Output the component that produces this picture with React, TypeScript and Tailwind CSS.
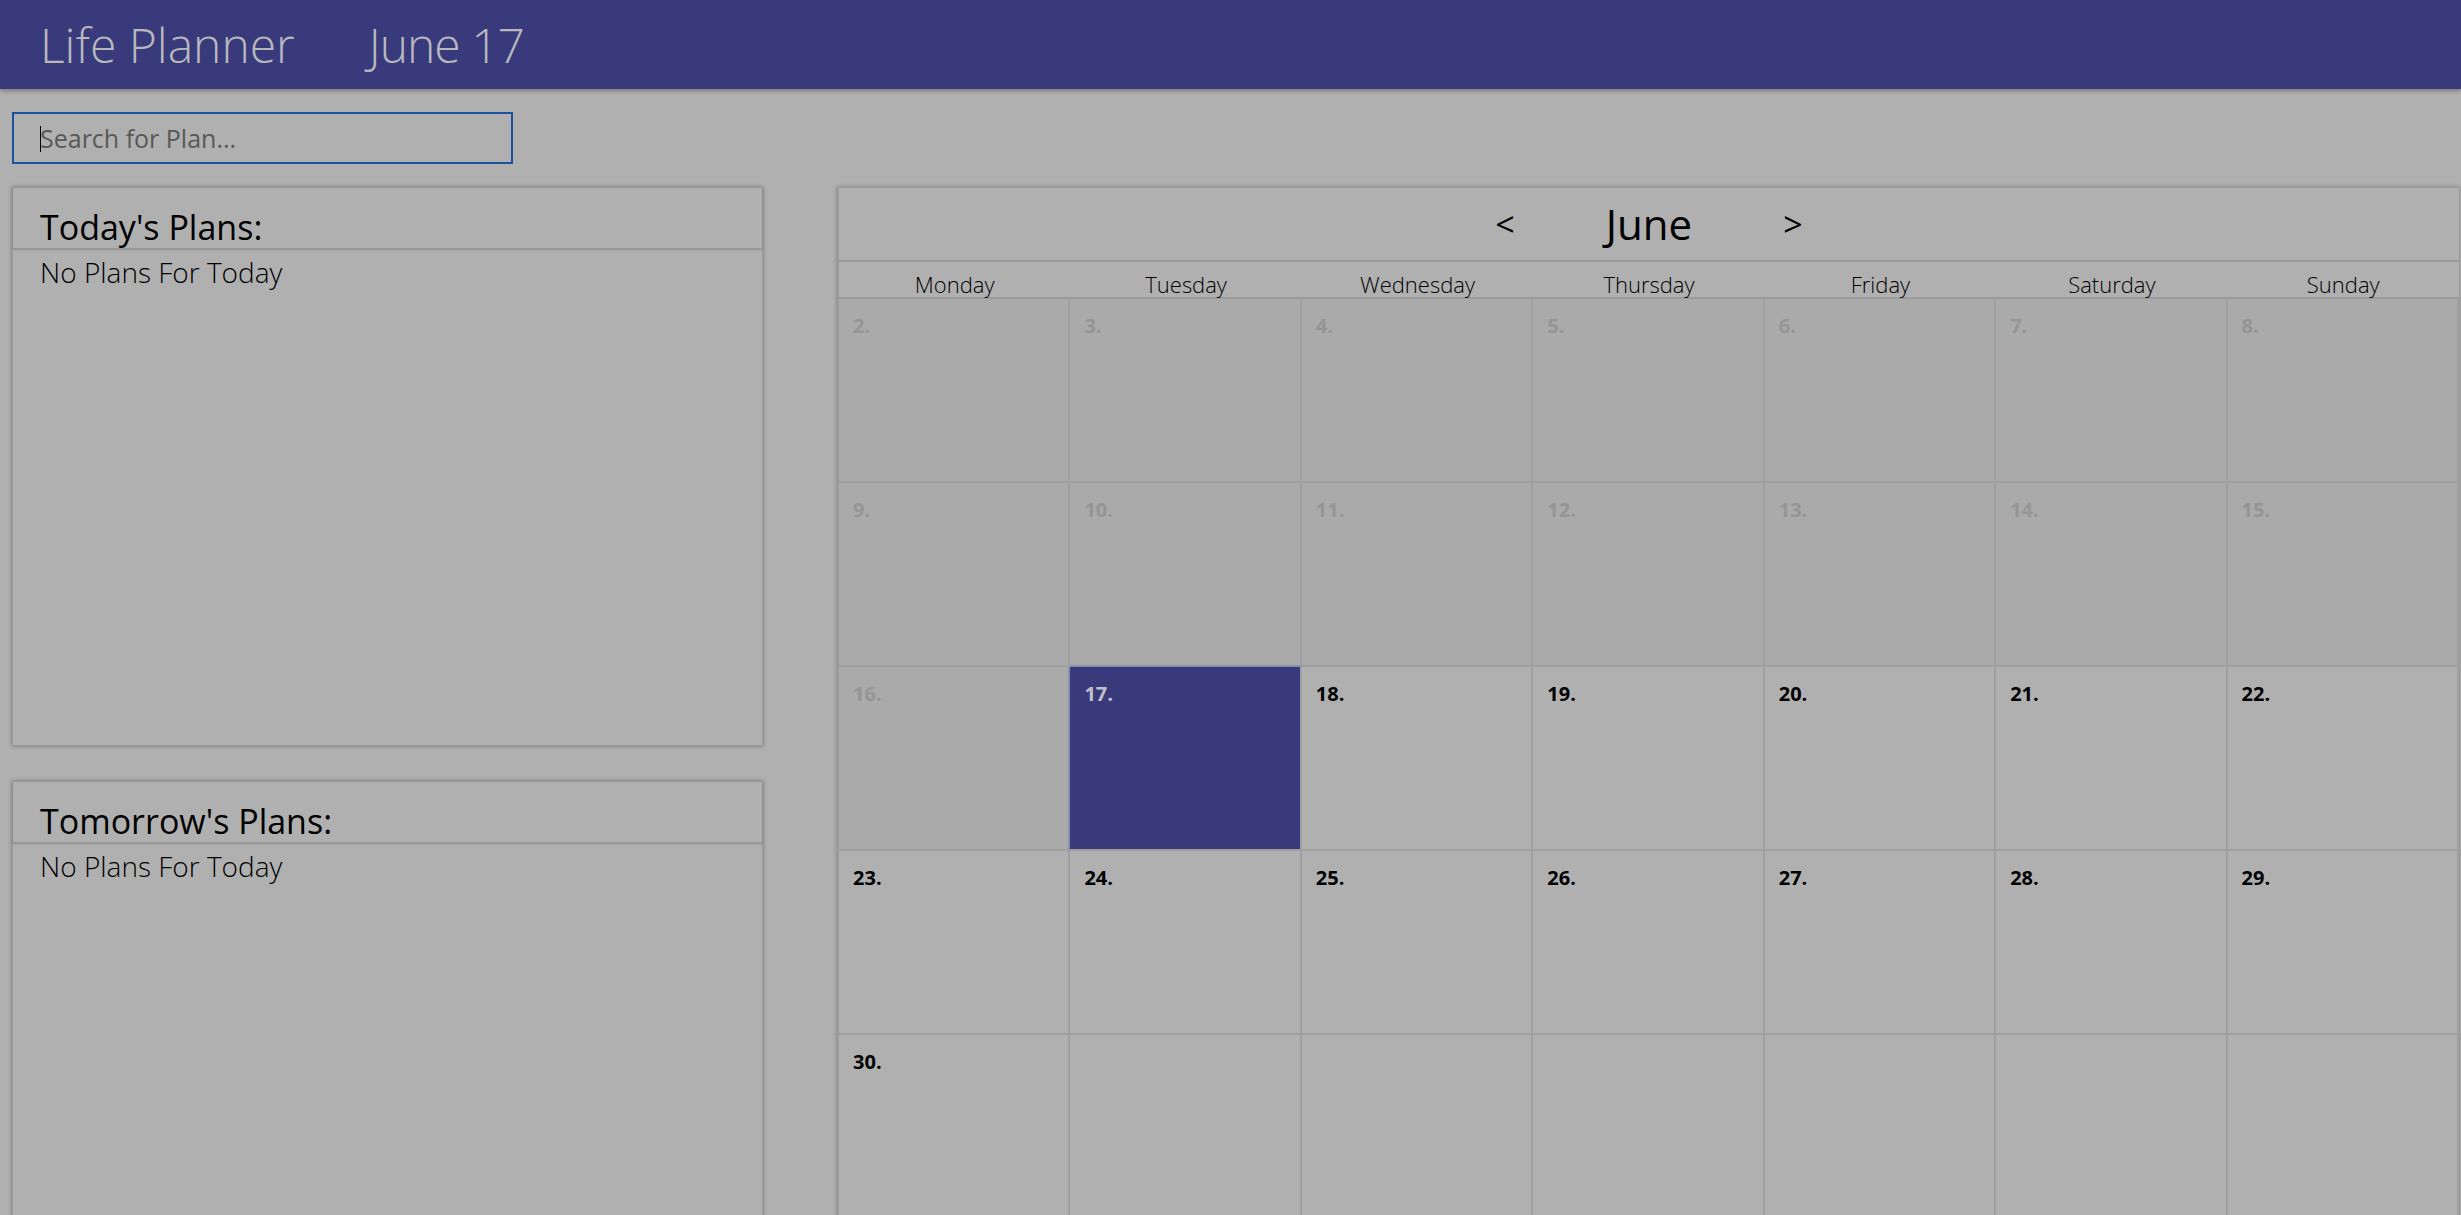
import React from 'react';

type Day = { n: number | null; state: 'past' | 'today' | 'future' | 'empty' };

const DAY_NAMES = ['Monday', 'Tuesday', 'Wednesday', 'Thursday', 'Friday', 'Saturday', 'Sunday'];

// June, weeks starting Monday the 2nd; today is the 17th
function buildDays(): Day[] {
  const days: Day[] = [];
  for (let n = 2; n <= 30; n++) {
    days.push({ n, state: n < 17 ? 'past' : n === 17 ? 'today' : 'future' });
  }
  while (days.length < 35) days.push({ n: null, state: 'empty' });
  return days;
}

function PlansPanel({ title }: { title: string }) {
  return (
    <div className="h-[559px] border border-[#999] bg-[#b0b0b0] shadow-[0_0_4px_rgba(0,0,0,0.35)]">
      <div className="h-[61px] flex items-end pl-[27px] pb-[4px] border-b border-[#979797] shadow-[0_1px_2px_rgba(0,0,0,0.2)]">
        <span className="text-[34px] leading-none text-black">{title}</span>
      </div>
      <div className="pl-[27px] pt-[6px] text-[28px] font-light text-black leading-tight">No Plans For Today</div>
    </div>
  );
}

function DayCell({ day }: { day: Day }) {
  const bg =
    day.state === 'past'
      ? 'bg-[#aaaaaa]'
      : day.state === 'today'
        ? 'bg-[#393a7c] shadow-[0_0_3px_#5068b0]'
        : 'bg-[#b0b0b0]';
  const color =
    day.state === 'past' ? 'text-[#959595]' : day.state === 'today' ? 'text-[#c0c0c8]' : 'text-black';
  return (
    <div className={`h-[184px] border-r-2 border-b-2 border-[#a0a0a0] pl-[14px] pt-[16px] ${bg}`}>
      {day.n !== null && (
        <span className={`text-[20px] font-bold leading-none ${color}`}>{day.n}.</span>
      )}
    </div>
  );
}

export default function App() {
  const days = buildDays();

  return (
    <div
      className="h-screen overflow-hidden bg-[#b0b0b0]"
      style={{ fontFamily: '"Open Sans", "Noto Sans", sans-serif' }}
    >
      {/* Header */}
      <header className="h-[89px] bg-[#393a7c] flex items-center pl-[40px] shadow-[0_2px_4px_rgba(0,0,0,0.3)] relative z-10">
        <span className="text-[48px] font-light text-[#b8b8bc] leading-none">Life Planner</span>
        <span className="ml-[74px] text-[48px] font-light text-[#b8b8bc] leading-none tracking-[-1px]">June 17</span>
      </header>

      <main className="pl-[12px] pr-[2px] pt-[23px]">
        {/* Search */}
        <div className="relative w-[501px] h-[52px] border-2 border-[#1d4fa0]">
          <input
            className="w-full h-full bg-transparent pl-[26px] text-[25px] text-black placeholder:text-[#585858] outline-none"
            placeholder="Search for Plan..."
          />
          <span className="absolute left-[26px] top-[12px] h-[26px] w-px bg-black" />
        </div>

        <div className="flex mt-[23px]">
          {/* Left column */}
          <div className="w-[751px] flex flex-col gap-[35px]">
            <PlansPanel title="Today's Plans:" />
            <PlansPanel title="Tomorrow's Plans:" />
          </div>

          {/* Calendar */}
          <div className="ml-[74px] flex-1 border-l-2 border-t border-[#9a9a9a] shadow-[0_0_4px_rgba(0,0,0,0.3)]">
            <div className="h-[74px] flex items-center justify-center border-b-2 border-[#9a9a9a]">
              <span className="w-[60px] text-[34px] text-black leading-none text-center">&lt;</span>
              <span className="w-[228px] text-[42px] text-black leading-none text-center">June</span>
              <span className="w-[60px] text-[34px] text-black leading-none text-center">&gt;</span>
            </div>
            <div className="grid grid-cols-7 h-[37px] border-b-2 border-[#9a9a9a]">
              {DAY_NAMES.map((d) => (
                <div key={d} className="flex items-end justify-center pb-[2px] text-[22px] font-light text-black leading-none">
                  {d}
                </div>
              ))}
            </div>
            <div className="grid grid-cols-7">
              {days.map((day, i) => (
                <DayCell key={i} day={day} />
              ))}
            </div>
          </div>
        </div>
      </main>
    </div>
  );
}
